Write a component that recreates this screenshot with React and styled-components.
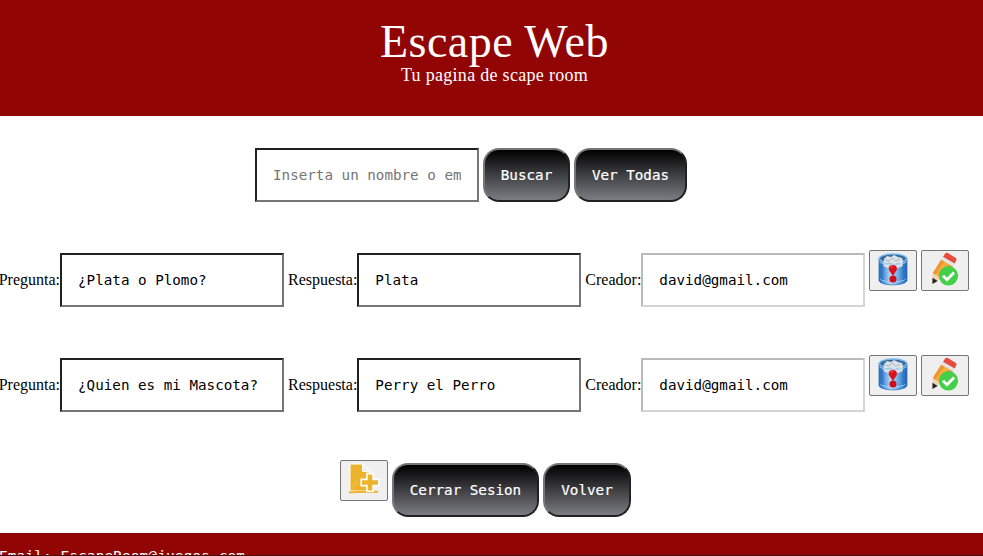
import React from "react";
import styled, { createGlobalStyle } from "styled-components";

const GlobalStyle = createGlobalStyle`
  *, *::before, *::after { box-sizing: border-box; }
  html, body { margin: 0; padding: 0; background: #fff; overflow: hidden; }
`;

const mono = `"DejaVu Sans Mono", monospace`;
const serif = `"Liberation Serif", serif`;

const Page = styled.div`
  display: flex;
  flex-direction: column;
  height: 556px;
  overflow: hidden;
  font-family: ${serif};
  font-size: 16px;
  color: #000;
`;

const Header = styled.header`
  display: flex;
  flex-direction: column;
  align-items: center;
  flex: none;
  height: 116px;
  padding: 17px 0 0 6px;
  background: #920505;
  color: #fff;
`;

const Title = styled.h1`
  margin: 0;
  font-size: 46px;
  line-height: 50px;
  font-weight: 400;
  letter-spacing: 0.5px;
  white-space: nowrap;
`;

const Subtitle = styled.p`
  margin: -3px 0 0;
  font-size: 18px;
  line-height: 22px;
  letter-spacing: 0.3px;
  white-space: nowrap;
`;

const Main = styled.main`
  flex: none;
  height: 417px;
  padding-top: 32px;
`;

const Row = styled.div`
  display: flex;
  align-items: center;
  gap: 4px;
  height: 54px;
  margin-left: ${(p) => p.$start}px;
  margin-bottom: ${(p) => p.$after || 0}px;
  white-space: nowrap;
`;

const Field = styled.label`
  display: flex;
  align-items: center;
  flex: none;
  line-height: 18px;
`;

const TextInput = styled.input`
  flex: none;
  width: 224px;
  height: 54px;
  margin: 0;
  padding: 0 16px;
  border: 2px solid;
  border-color: #212121 #767676 #767676 #212121;
  border-radius: 0;
  outline: none;
  background: #fff;
  color: #000;
  font-family: ${mono};
  font-size: 14.24px;

  &::placeholder { color: #757575; opacity: 1; }
  &:disabled {
    border-color: #bababa #d4d4d4 #d4d4d4 #bababa;
    color: #000;
  }
`;

const Button = styled.button`
  flex: none;
  width: ${(p) => p.$width}px;
  height: 54px;
  padding: 0;
  border: 2px solid;
  border-color: #767676 #212121 #212121 #767676;
  border-radius: 16px;
  background: linear-gradient(#000, #7c7d83);
  color: #fff;
  font-family: ${mono};
  font-size: 14.24px;
  -webkit-text-stroke: 0.2px #fff;
  white-space: nowrap;
`;

const IconButton = styled.button`
  display: flex;
  align-items: center;
  justify-content: center;
  align-self: flex-start;
  flex: none;
  width: 48px;
  height: 41px;
  margin-top: -3px;
  padding: 0;
  border: 1px solid #767676;
  border-radius: 2px;
  background: #efefef;

  svg { display: block; width: 34px; height: 35px; overflow: visible; }
`;

const Footer = styled.footer`
  flex: 1;
  padding: 14px 0 0;
  overflow: hidden;
  background: #920505;
  border-bottom: 1px solid #4b0b0b;
  color: #fff;
  font-family: ${mono};
  font-size: 14.6px;
  line-height: 18px;
  text-indent: -1px;
  white-space: nowrap;
`;

function TrashIcon() {
  return (
    <svg viewBox="0 0 34 35" aria-hidden="true">
      <defs>
        <linearGradient id="can" x1="0" x2="1">
          <stop offset="0" stopColor="#2463b4" />
          <stop offset=".18" stopColor="#5598de" />
          <stop offset=".42" stopColor="#b9dcf8" />
          <stop offset=".65" stopColor="#72b4ed" />
          <stop offset="1" stopColor="#185bad" />
        </linearGradient>
      </defs>
      <path d="M3 5v22.5c1 5.8 26.5 5.8 28 0V5Z" fill="url(#can)" stroke="#3476bd" strokeWidth=".8" />
      <ellipse cx="17" cy="5.5" rx="13.7" ry="4.4" fill="#37699b" stroke="#7bb9ef" strokeWidth="1.5" />
      <path d="m8 6 3-3 4 1 3-2 4 2 4 1 1 3v5l-5 2-5-1-5 1-5-2Z" fill="#d8e1e8" />
      <path d="m9 7 4 1 3-3 4 3 4-2M9 11l5-1 4 2 5-2" fill="none" stroke="#9cb0be" strokeWidth=".8" />
      <path d="M3.5 9c5 3.4 22 3.4 27 0M4 26c5 4 21 4 26 0" fill="none" stroke="#a5d2f7" strokeWidth="1" />
      <path d="M6 11v16M28 11v16" stroke="#2f76c2" strokeWidth="3" opacity=".6" />
      <path d="M12.7 15c.3-4 8.5-4 8.2.5 0 3-2.8 4.5-3.4 6.8h-1.4c-.4-2.4-3.7-4.3-3.4-7.3Z" fill="#dc111b" />
      <circle cx="17" cy="26" r="3.5" fill="#ce0d18" />
      <path d="M14.7 15c.4-1.2 1.2-1.5 2.2-1.5" stroke="#ff625b" fill="none" />
    </svg>
  );
}

function EditIcon() {
  return (
    <svg viewBox="0 0 34 35" aria-hidden="true">
      <path d="m4.7 20 8.5-13.5 11.8 7L14 28Z" fill="#ee962d" />
      <path d="M7.5 21.8 16.5 8l4.7 2.8L11 26Z" fill="#f9ad3f" />
      <path d="m13.2 6.5 1.8-2.8 11.8 7-1.8 2.8Z" fill="#e1e5e7" />
      <path d="m15 3.7 2-3c.7-1.1 1.7-1.2 2.8-.6l7.7 4.6c1.1.7 1.4 1.6.7 2.7l-1.5 3.2Z" fill="#e74b3e" />
      <path d="m4.7 20 8.5 5.2-8.8 5.2Z" fill="#f3d3b4" />
      <path d="m4.5 24.8 5.2 3.1-5.3 3Z" fill="#252525" />
      <circle cx="20.4" cy="22.8" r="9.7" fill="#43cf48" />
      <path d="m15 22.7 4 4 7-7.3" fill="none" stroke="#fff" strokeWidth="2.9" />
    </svg>
  );
}

function AddFileIcon() {
  return (
    <svg viewBox="0 0 34 35" aria-hidden="true">
      <path d="M3 1h12.5L24 9.5V28H3Z" fill="#eeb32c" stroke="#fff" strokeWidth="1" />
      <path d="m15.5 1 8.5 8.5-8.5-1.3Z" fill="#f2f0ea" stroke="#fff" strokeWidth="1" />
      <path d="M2 29.5c9-.9 19-.5 29-.8" fill="none" stroke="#eeb32c" strokeWidth="2" />
      <path d="M20.7 11.5h4.6v5.7H31v4.6h-5.7v5.7h-4.6v-5.7H15v-4.6h5.7Z" fill="#eeb32c" stroke="#fff" strokeWidth="3.2" paintOrder="stroke" />
      <path d="m5 23 5-6M5 26l6-7" stroke="#f6c74c" strokeWidth=".7" />
    </svg>
  );
}

const questions = [
  { question: "¿Plata o Plomo?", answer: "Plata", creator: "david@gmail.com" },
  { question: "¿Quien es mi Mascota?", answer: "Perry el Perro", creator: "david@gmail.com" },
];

export default function App() {
  return (
    <>
      <GlobalStyle />
      <Page>
        <Header>
          <Title>Escape Web</Title>
          <Subtitle>Tu pagina de scape room</Subtitle>
        </Header>
        <Main>
          <Row $start={255} $after={51}>
            <TextInput placeholder="Inserta un nombre o em" />
            <Button $width={87}>Buscar</Button>
            <Button $width={113}>Ver Todas</Button>
          </Row>
          {questions.map((item) => (
            <Row key={item.question} $start={-1.3} $after={51}>
              <Field>Pregunta:<TextInput defaultValue={item.question} /></Field>
              <Field>Respuesta:<TextInput defaultValue={item.answer} /></Field>
              <Field>Creador:<TextInput defaultValue={item.creator} disabled /></Field>
              <IconButton aria-label="Eliminar"><TrashIcon /></IconButton>
              <IconButton aria-label="Editar"><EditIcon /></IconButton>
            </Row>
          ))}
          <Row $start={340}>
            <IconButton aria-label="Agregar"><AddFileIcon /></IconButton>
            <Button $width={147}>Cerrar Sesion</Button>
            <Button $width={88}>Volver</Button>
          </Row>
        </Main>
        <Footer>Email: EscapeRoom@juegos.com</Footer>
      </Page>
    </>
  );
}
